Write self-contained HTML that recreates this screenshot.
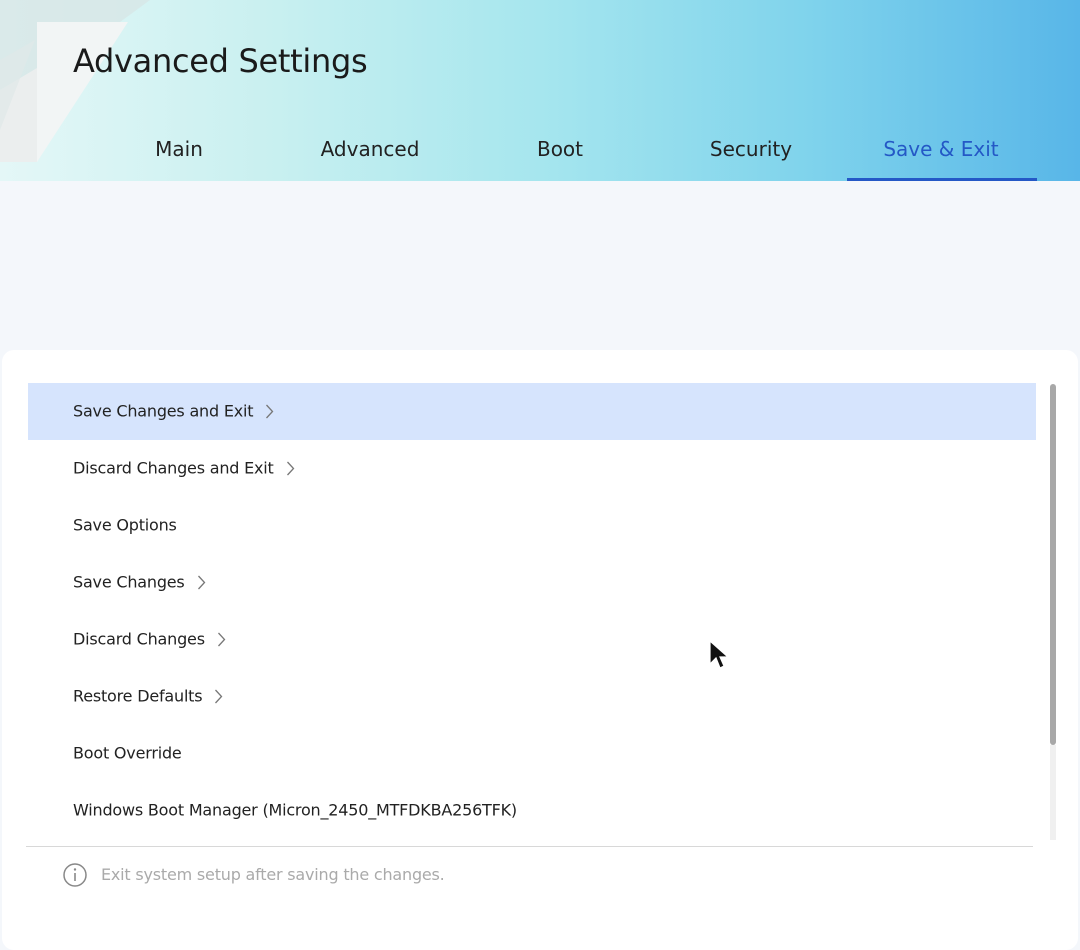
<!DOCTYPE html>
<html><head><meta charset="utf-8"><style>
body{margin:0;width:1080px;height:930px;overflow:hidden;background:#f4f7fb;font-family:"DejaVu Sans","Liberation Sans",sans-serif;position:relative}
.hdr{position:absolute;left:0;top:0;width:1080px;height:181px;background:linear-gradient(90deg,#e4f7f7 0%,#c9f0f0 25%,#a6e6ee 50%,#7fd3ec 75%,#58b6e8 100%);overflow:hidden}
.title{position:absolute;left:73px;top:42px;font-size:32px;color:#1a1a1a;letter-spacing:-0.3px}
.tab{position:absolute;top:137px;font-size:20px;color:#222;transform:translateX(-50%)}
.ul{position:absolute;left:847px;top:178px;width:190px;height:3px;background:#2458c6}
.card{position:absolute;left:2px;top:350px;width:1076px;height:600px;background:#fff;border-radius:12px}
.hl{position:absolute;left:28px;top:383px;width:1008px;height:57px;background:#d6e4fd}
.row{position:absolute;left:73px;font-size:16px;color:#222;transform:translateY(-50%);letter-spacing:-0.2px;display:flex;align-items:center}
.row svg{margin-left:12px}
.sb{position:absolute;left:1050px;top:384px;width:6px;height:361px;background:#a8a8a8;border-radius:3px}
.trk{position:absolute;left:1050px;top:745px;width:6px;height:95px;background:#f0f0f0}
.div{position:absolute;left:26px;top:846px;width:1007px;height:1px;background:#d8d8d8}
.info{position:absolute;left:101px;top:865px;font-size:16px;color:#aaa;letter-spacing:-0.2px}
</style></head><body>
<div class="hdr">
<svg width="200" height="181" style="position:absolute;left:0;top:0">
<polygon points="0,0 150,0 120,22 0,90" fill="#d7e6e6" opacity=".8"/>
<polygon points="37,22 128,22 37,162" fill="#f2f5f5"/>
<polygon points="0,90 37,68 37,162 0,162" fill="#ebeeee"/>
<polygon points="0,60 35,40 0,130" fill="#dfe8e8" opacity=".7"/>
</svg>
<div class="title">Advanced Settings</div>
<div class="tab" style="left:179px">Main</div>
<div class="tab" style="left:370px">Advanced</div>
<div class="tab" style="left:560px">Boot</div>
<div class="tab" style="left:751px">Security</div>
<div class="tab" style="left:941px;color:#2458c6">Save &amp; Exit</div>
<div class="ul"></div>
</div>
<div class="card"></div>
<div class="hl"></div>
<div class="row" style="top:411px">Save Changes and Exit<svg width="9" height="16"><path d="M1.5 1.5 L7.5 8 L1.5 14.5" fill="none" stroke="#777" stroke-width="1.3"/></svg></div>
<div class="row" style="top:468px">Discard Changes and Exit<svg width="9" height="16"><path d="M1.5 1.5 L7.5 8 L1.5 14.5" fill="none" stroke="#777" stroke-width="1.3"/></svg></div>
<div class="row" style="top:525px">Save Options</div>
<div class="row" style="top:582px">Save Changes<svg width="9" height="16"><path d="M1.5 1.5 L7.5 8 L1.5 14.5" fill="none" stroke="#777" stroke-width="1.3"/></svg></div>
<div class="row" style="top:639px">Discard Changes<svg width="9" height="16"><path d="M1.5 1.5 L7.5 8 L1.5 14.5" fill="none" stroke="#777" stroke-width="1.3"/></svg></div>
<div class="row" style="top:696px">Restore Defaults<svg width="9" height="16"><path d="M1.5 1.5 L7.5 8 L1.5 14.5" fill="none" stroke="#777" stroke-width="1.3"/></svg></div>
<div class="row" style="top:753px">Boot Override</div>
<div class="row" style="top:810px">Windows Boot Manager (Micron_2450_MTFDKBA256TFK)</div>
<div class="trk"></div><div class="sb"></div>
<div class="div"></div>
<svg width="26" height="26" style="position:absolute;left:62px;top:862px"><circle cx="13" cy="13" r="11" fill="none" stroke="#888" stroke-width="1.5"/><line x1="13" y1="11" x2="13" y2="19" stroke="#888" stroke-width="1.6"/><circle cx="13" cy="7.5" r="1.2" fill="#888"/></svg>
<div class="info">Exit system setup after saving the changes.</div>
<svg width="24" height="36" style="position:absolute;left:708px;top:640px"><path d="M2 1 L2 24 L8 18 L12 28 L16 26 L12 17 L20 17 Z" fill="#111" stroke="#fff" stroke-width="1.2"/></svg>
</body></html>
